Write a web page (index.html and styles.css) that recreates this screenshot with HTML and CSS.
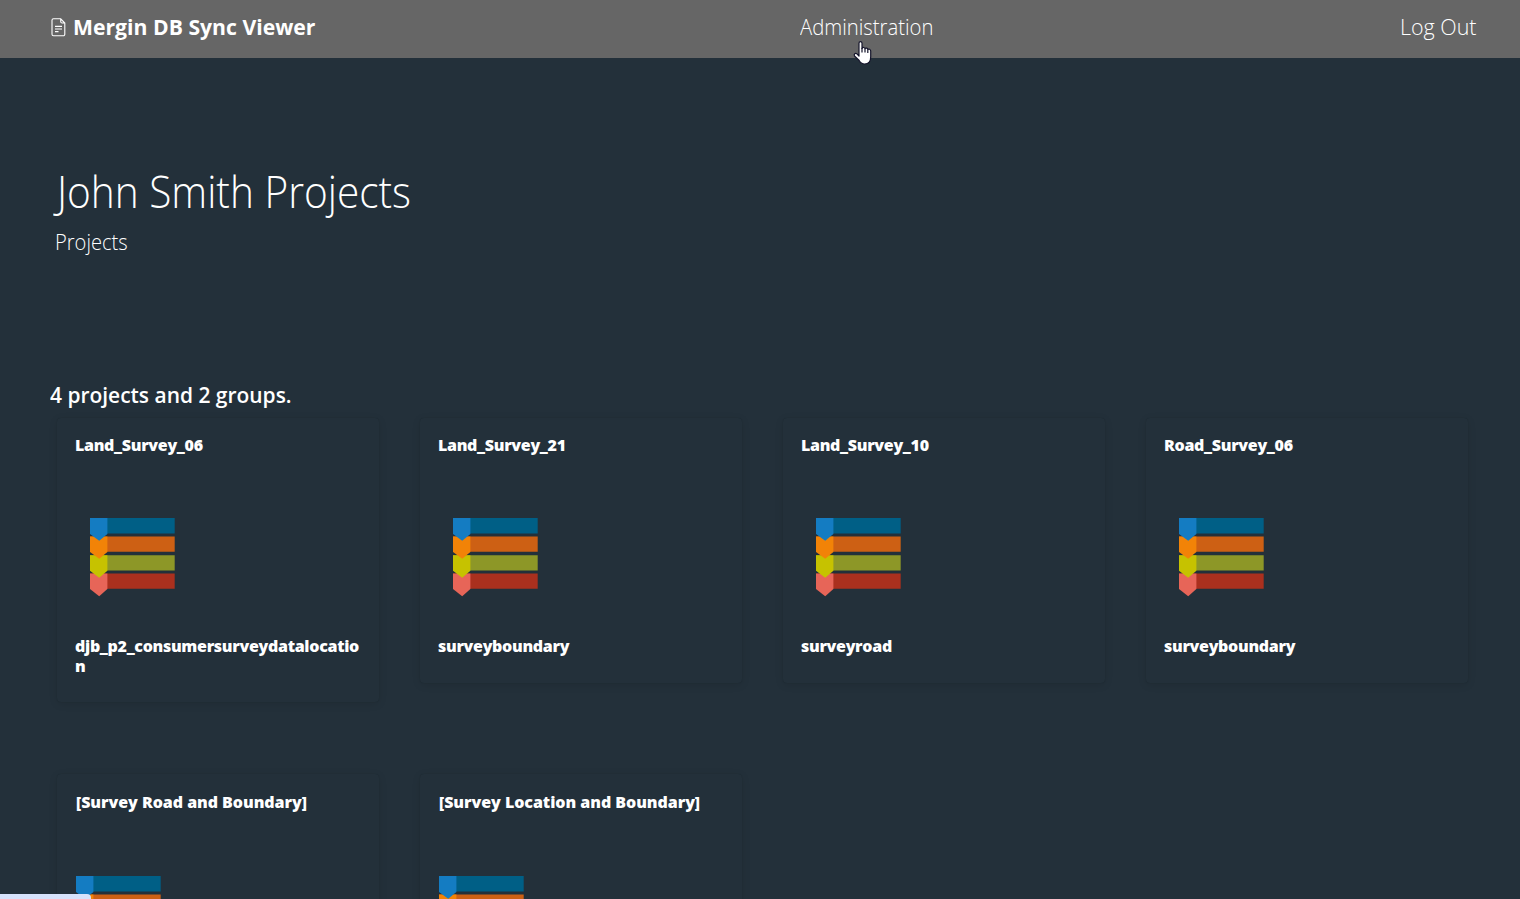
FILE: index.html
```
<!DOCTYPE html>
<html lang="en">
<head>
<meta charset="utf-8">
<title>Mergin DB Sync Viewer</title>
<link rel="stylesheet" href="styles.css">
</head>
<body>
<svg class="defs" width="0" height="0" aria-hidden="true">
  <symbol id="layers" viewBox="0 0 86 80">
    <path fill="#005f86" d="M0 .9h84.700v15.600H0z"/>
    <path fill="#cd6014" d="M0 19.500h84.700v15.200H0z"/>
    <path fill="#8d9727" d="M0 38.200h84.700v15.300H0z"/>
    <path fill="#aa301e" d="M0 56.500h84.700v15.200H0z"/>
    <path fill="#e76558" d="M0 56.500h17.400v15.500L9.200 79.300 0 72z"/>
    <path fill="#c6c200" d="M0 38.200h17.400v15.500L9.200 60.800 0 53.700z"/>
    <path fill="#f28307" d="M0 19.500h17.400v15.400L9.200 41.700 0 34.900z"/>
    <path fill="#147cc2" d="M0 .9h17.400v16L9.200 23.700 0 16.900z"/>
  </symbol>
</svg>
<header class="navbar">
  <a class="brand">
    <svg class="brand-icon" viewBox="0 0 15 19" fill="none" stroke="#fff" stroke-width="1.100">
      <path d="M2.500.8h7.200L13.800 5v11.300a1.500 1.500 0 0 1-1.500 1.500H2.500A1.500 1.500 0 0 1 1 16.300v-14A1.500 1.500 0 0 1 2.500.8zM9.700.8v2.800A1.400 1.400 0 0 0 11.100 5h2.700M4 8.400h7M4 11h7M4 13.600h3.500"/>
    </svg>
    <span class="brand-name">Mergin DB Sync Viewer</span>
  </a>
  <a class="nav-link admin">Administration</a>
  <a class="nav-link logout">Log Out</a>
</header>
<main>
  <section class="hero">
    <h1 class="title">John Smith Projects</h1>
    <p class="subtitle">Projects</p>
  </section>
  <h2 class="summary">4 projects and 2 groups.</h2>
  <section class="grid">
    <article class="card"><h3 class="name">Land_Survey_06</h3><svg class="layers"><use href="#layers"/></svg><p class="table">djb_p2_consumersurveydatalocation</p></article>
    <article class="card"><h3 class="name">Land_Survey_21</h3><svg class="layers"><use href="#layers"/></svg><p class="table">surveyboundary</p></article>
    <article class="card"><h3 class="name">Land_Survey_10</h3><svg class="layers"><use href="#layers"/></svg><p class="table">surveyroad</p></article>
    <article class="card"><h3 class="name">Road_Survey_06</h3><svg class="layers"><use href="#layers"/></svg><p class="table">surveyboundary</p></article>
    <article class="card group"><h3 class="name">[Survey Road and Boundary]</h3><svg class="layers"><use href="#layers"/></svg></article>
    <article class="card group"><h3 class="name">[Survey Location and Boundary]</h3><svg class="layers"><use href="#layers"/></svg></article>
  </section>
</main>
<div class="status"></div>
<svg class="cursor" viewBox="0 0 20 26">
  <path fill="#fff" stroke="#15152b" stroke-width="1.200" stroke-linejoin="round" d="M6 13.500V3.200C6 1 9 1 9 3.200V8.500C9.500 7 11.800 7.200 12 8.700c.7-1 2.600-.7 2.800.7 1-.7 2.900-.2 2.900 1.600V17c0 4-2 7-6 7-3 0-4.500-1.300-5.700-3.700L1.500 16c-.9-2 .7-3.400 2.400-2.200L6 16z"/>
  <path stroke="#15152b" stroke-width="1.200" d="M9 8v4.500M12 8.700v3.800M14.800 9.500v3.500"/>
</svg>
</body>
</html>
```
FILE: styles.css
```
* { box-sizing: border-box; }
body {
  margin: 0;
  height: 899px;
  overflow: hidden;
  background: #23303a;
  color: #fff;
  font-family: "Segoe UI", "Open Sans", "Noto Sans", sans-serif;
}
main { height: 841px; overflow: hidden; }
h1, h2, h3, p { margin: 0; }
.defs { position: absolute; }
.navbar {
  display: grid;
  grid-template-columns: 749px 1fr auto;
  height: 58px;
  padding: 0 44px 6px 51px;
  align-items: center;
  background: #666;
  font-size: 22px;
  line-height: 30px;
}
.brand { display: flex; align-items: center; gap: 7px; }
.brand-icon { width: 15px; height: 19px; margin-top: 2px; }
.brand-name { font-weight: 700; transform: scaleX(.963); transform-origin: left; }
.nav-link { font-weight: 300; }
.admin { transform: scaleX(.922); transform-origin: left; }
.logout { transform: scaleX(.975); transform-origin: right; }
.hero { height: 320px; padding: 103px 55px 0 57px; }
.title { font-size: 44px; line-height: 60px; font-weight: 300; transform: scaleX(.922); transform-origin: left; white-space: nowrap; }
.subtitle { margin: 5px 0 0 -2px; font-size: 22px; line-height: 30px; font-weight: 300; transform: scaleX(.915); transform-origin: left; }
.summary { height: 40px; margin-left: 50px; font-size: 22px; line-height: 32px; font-weight: 600; transform: scaleX(.952); transform-origin: left; }
.grid {
  display: grid;
  grid-template-columns: repeat(4, 322px);
  column-gap: 41px;
  row-gap: 72px;
  align-items: start;
  padding-left: 57px;
}
.card {
  display: flex;
  flex-direction: column;
  height: 265px;
  padding: 17px 18px 0;
  border-radius: 4px;
  background: #23303a;
  box-shadow: 0 2px 8px rgba(0, 0, 0, .1), 0 0 1px rgba(0, 0, 0, .2);
}
.card:first-child { height: 284px; }
.name, .table { font-size: 16px; line-height: 20px; font-weight: 800; letter-spacing: -.3px; }
.layers { display: block; width: 86px; height: 80px; margin: 62px 0 0 15px; }
.table { margin-top: 39px; overflow-wrap: anywhere; }
.group { padding: 18px 18px 0 19px; }
.group .layers { margin: 63px 0 0 0; }
.group .name { letter-spacing: -.04px; }
.status {
  position: absolute;
  left: 0;
  bottom: 0;
  width: 91px;
  height: 5px;
  border-radius: 0 4px 0 0;
  background: #d6e2fb;
}
.cursor { position: absolute; left: 853px; top: 40px; width: 20px; height: 26px; fill: none; }
```
